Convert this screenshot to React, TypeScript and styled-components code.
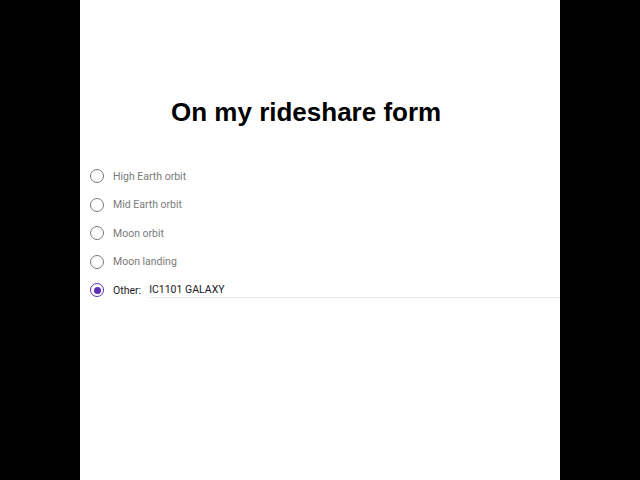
import React from "react";
import styled, { createGlobalStyle } from "styled-components";

const Global = createGlobalStyle`
  html, body { margin: 0; padding: 0; background: #000; }
  body { width: 640px; height: 480px; overflow: hidden; }
`;

const Stage = styled.div`
  display: flex;
  justify-content: center;
  width: 640px;
  height: 480px;
  background: #000;
`;

const Panel = styled.div`
  width: 480px;
  height: 480px;
  background: #fff;
  display: flex;
  flex-direction: column;
  overflow: hidden;
`;

const Title = styled.h1`
  margin: 96px 0 0 91px;
  font-family: "Liberation Sans", Arial, sans-serif;
  font-weight: 700;
  font-size: 26px;
  line-height: 32px;
  color: #000;
`;

const Options = styled.div`
  margin-top: 34px;
  padding-left: 10px;
  display: flex;
  flex-direction: column;
`;

const Row = styled.div`
  display: flex;
  align-items: center;
  height: 28.5px;
`;

const Radio = styled.span<{ $checked?: boolean }>`
  box-sizing: border-box;
  width: 14px;
  height: 14px;
  border-radius: 50%;
  border: ${(p) => (p.$checked ? "1.8px" : "1.5px")} solid ${(p) => (p.$checked ? "#5b2fb0" : "#7a7a7a")};
  display: flex;
  align-items: center;
  justify-content: center;
  flex-shrink: 0;
  &::after {
    content: "";
    width: 7px;
    height: 7px;
    border-radius: 50%;
    background: #5b2fb0;
    display: ${(p) => (p.$checked ? "block" : "none")};
  }
`;

const Label = styled.span<{ $dark?: boolean }>`
  margin-left: 9px;
  font-family: Roboto, "Liberation Sans", sans-serif;
  font-size: 10.5px;
  color: ${(p) => (p.$dark ? "#202124" : "#7a7a7a")};
`;

const OtherInput = styled.div`
  flex: 1;
  margin-left: 8px;
  height: 14px;
  border-bottom: 1px solid #ebebeb;
  font-family: Roboto, "Liberation Sans", sans-serif;
  font-size: 10.5px;
  color: #202124;
  line-height: 13px;
`;

const options = ["High Earth orbit", "Mid Earth orbit", "Moon orbit", "Moon landing"];

export default function App() {
  return (
    <>
      <Global />
      <Stage>
        <Panel>
          <Title>On my rideshare form</Title>
          <Options>
            {options.map((o) => (
              <Row key={o}>
                <Radio />
                <Label>{o}</Label>
              </Row>
            ))}
            <Row>
              <Radio $checked />
              <Label $dark>Other:</Label>
              <OtherInput>IC1101 GALAXY</OtherInput>
            </Row>
          </Options>
        </Panel>
      </Stage>
    </>
  );
}
